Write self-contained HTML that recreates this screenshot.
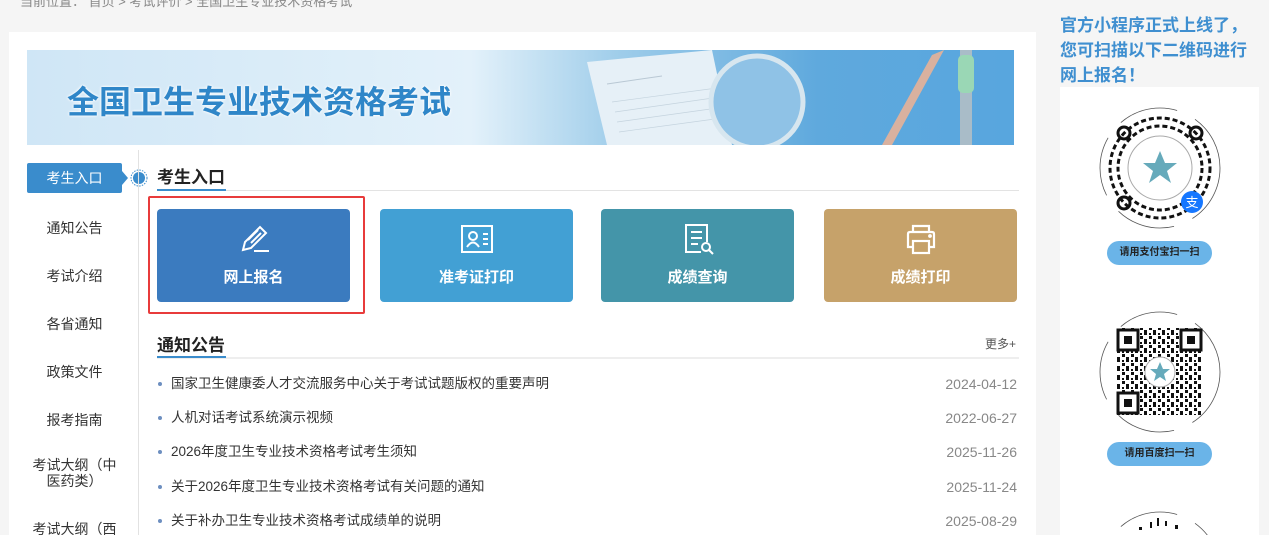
<!DOCTYPE html>
<html><head><meta charset="utf-8">
<style>
*{margin:0;padding:0;box-sizing:border-box}
html,body{width:1269px;height:535px;overflow:hidden}
body{background:#f5f5f5;font-family:"Liberation Sans","Noto Sans CJK SC",sans-serif;position:relative}
.abs{position:absolute}
.panel{left:9px;top:32px;width:1027px;height:503px;background:#fff}
.banner{left:27px;top:50px;width:987px;height:95px;background:linear-gradient(90deg,#cfe6f6 0%,#e3f1fa 45%,#9fcdea 60%,#5fa9dd 80%,#58a6de 100%);overflow:hidden}
.banner h1{position:absolute;left:40px;top:27px;font-size:32px;font-weight:bold;color:#2f86c8;text-shadow:0 0 3px #fff,0 0 2px #fff}
.nav{left:27px;width:95px;text-align:center;font-size:14px;color:#333}
.navact{left:27px;top:163px;width:95px;height:30px;background:#3a8ccc;color:#fff;font-size:14px;line-height:30px;text-align:center;border-radius:2px}
.vline{left:138px;top:150px;width:1px;height:385px;background:#e2e2e2}
.h2{font-size:17px;font-weight:bold;color:#222}
.btn{top:209px;width:193px;height:93px;border-radius:4px;color:#fff;font-size:15px;font-weight:bold;text-align:center}
.btn span{position:absolute;left:0;right:0;top:57px}
.btn svg{position:absolute;left:50%;top:13px;margin-left:-17px}
.news{left:157px;width:860px;height:18px;font-size:13.5px;color:#333;line-height:18px}
.news i{position:absolute;left:1px;top:7px;width:4px;height:4px;border-radius:50%;background:#6d8fc0}
.news b{font-weight:normal;position:absolute;left:14px;top:0;line-height:18px}
.news em{font-style:normal;position:absolute;right:0;top:0;color:#888;font-size:14px;line-height:18px}
.pill{left:1107px;width:105px;height:24px;border-radius:12px;background:#6ab4e8;color:#222;font-size:10px;font-weight:bold;text-align:center;line-height:24px}
</style></head><body>
<div class="abs" style="left:20px;top:-9px;font-size:13px;color:#888">当前位置： 首页 &gt; 考试评价 &gt; 全国卫生专业技术资格考试</div>
<div class="abs panel"></div>
<div class="abs banner">
<h1>全国卫生专业技术资格考试</h1>
<svg class="abs" style="left:540px;top:0" width="447" height="95">
<polygon points="20,12 145,0 165,95 40,95" fill="#e6f0f7"/>
<line x1="40" y1="34" x2="95" y2="26" stroke="#b9c8d4"/>
<g stroke="#c4d3de" stroke-width="0.7"><line x1="45" y1="52" x2="150" y2="38"/><line x1="48" y1="62" x2="160" y2="46"/><line x1="50" y1="72" x2="165" y2="56"/><line x1="52" y1="82" x2="170" y2="66"/></g>
<circle cx="190" cy="52" r="46" fill="#8fc2e6" stroke="#d7e6ef" stroke-width="5"/>
<polygon points="365,5 377,0 325,95 315,95" fill="#d9b19f"/>
<rect x="393" y="0" width="12" height="95" fill="#a9bcc8"/>
<rect x="391" y="5" width="16" height="38" rx="5" fill="#9ad7b5"/>
</svg>
</div>
<div class="abs navact">考生入口</div>
<svg class="abs" style="left:120px;top:166px" width="30" height="26"><polygon points="2,5 8,12 2,19" fill="#3a8ccc"/><circle cx="19" cy="12" r="8" fill="#fff" stroke="#3a8ccc" stroke-dasharray="1.5 1.2"/><circle cx="19" cy="12" r="6" fill="#3a8ccc"/></svg>
<div class="abs vline"></div>
<div class="abs nav" style="top:218px">通知公告</div>
<div class="abs nav" style="top:266px">考试介绍</div>
<div class="abs nav" style="top:314px">各省通知</div>
<div class="abs nav" style="top:362px">政策文件</div>
<div class="abs nav" style="top:410px">报考指南</div>
<div class="abs nav" style="top:457px;line-height:16px">考试大纲（中<br>医药类）</div>
<div class="abs nav" style="top:519px">考试大纲（西</div>

<div class="abs h2" style="left:157px;top:163px">考生入口</div>
<div class="abs" style="left:157px;top:190px;width:862px;height:1px;background:#e3e3e3"></div>
<div class="abs" style="left:157px;top:189px;width:69px;height:2px;background:#3a8ccc"></div>

<div class="abs" style="left:148px;top:196px;width:217px;height:118px;border:2px solid #e83b3b;border-radius:2px"></div>
<div class="abs btn" style="left:157px;background:#3b7bbf"><svg width="34" height="34" viewBox="0 0 34 34" fill="none" stroke="#fff" stroke-width="2"><path d="M6 28 L8 20 L23 5 L29 11 L14 26 Z"/><path d="M11 18 L21 8 M14 21 L24 11"/><path d="M17 29 H32"/></svg><span>网上报名</span></div>
<div class="abs btn" style="left:380px;background:#42a0d4"><svg width="34" height="34" viewBox="0 0 34 34" fill="none" stroke="#fff" stroke-width="2"><rect x="2" y="4" width="30" height="26"/><circle cx="13" cy="14" r="4"/><path d="M7 25 Q13 16 19 25"/><path d="M23 12h5M23 17h5M23 22h5"/></svg><span>准考证打印</span></div>
<div class="abs btn" style="left:601px;background:#4495a9"><svg width="34" height="34" viewBox="0 0 34 34" fill="none" stroke="#fff" stroke-width="2"><path d="M20 30 H5 V3 H26 V20"/><path d="M10 10h11M10 16h11M10 22h7"/><circle cx="25" cy="25" r="4"/><path d="M28 28 L32 32"/></svg><span>成绩查询</span></div>
<div class="abs btn" style="left:824px;background:#c6a26a"><svg width="34" height="34" viewBox="0 0 34 34" fill="none" stroke="#fff" stroke-width="2.2"><path d="M9 10 V4 H25 V10"/><path d="M9 25 H4 V12 Q4 10 6 10 H28 Q30 10 30 12 V25 H25"/><rect x="9" y="19" width="16" height="12"/><circle cx="26" cy="14" r="0.8" fill="#fff"/></svg><span>成绩打印</span></div>

<div class="abs h2" style="left:157px;top:331px">通知公告</div>
<div class="abs" style="left:985px;top:335px;font-size:12px;color:#555">更多+</div>
<div class="abs" style="left:157px;top:357px;width:862px;height:2px;background:#eee"></div>
<div class="abs" style="left:157px;top:356px;width:69px;height:2px;background:#3a8ccc"></div>

<div class="abs news" style="top:375px"><i></i><b>国家卫生健康委人才交流服务中心关于考试试题版权的重要声明</b><em>2024-04-12</em></div>
<div class="abs news" style="top:409px"><i></i><b>人机对话考试系统演示视频</b><em>2022-06-27</em></div>
<div class="abs news" style="top:443px"><i></i><b>2026年度卫生专业技术资格考试考生须知</b><em>2025-11-26</em></div>
<div class="abs news" style="top:478px"><i></i><b>关于2026年度卫生专业技术资格考试有关问题的通知</b><em>2025-11-24</em></div>
<div class="abs news" style="top:512px"><i></i><b>关于补办卫生专业技术资格考试成绩单的说明</b><em>2025-08-29</em></div>

<div class="abs" style="left:1060px;top:13px;font-size:17px;font-weight:bold;color:#3f8fd0;line-height:25px;white-space:nowrap">官方小程序正式上线了，<br>您可扫描以下二维码进行<br>网上报名！</div>
<div class="abs" style="left:1060px;top:87px;width:199px;height:448px;background:#fff"></div>

<svg class="abs" style="left:1095px;top:103px" width="130" height="130">
<circle cx="65" cy="65" r="60" fill="none" stroke="#555" stroke-width="0.8" stroke-dasharray="60 20"/>
<g fill="none" stroke="#111" stroke-width="3" stroke-dasharray="5 3"><circle cx="65" cy="65" r="50"/><circle cx="65" cy="65" r="42"/></g>
<circle cx="65" cy="65" r="32" fill="#fff" stroke="#aaa"/>
<g fill="none" stroke="#111" stroke-width="3"><circle cx="29" cy="30" r="6"/><circle cx="101" cy="30" r="6"/><circle cx="29" cy="100" r="6"/></g>
<polygon points="65,48 70,60 82,60 72,68 76,80 65,72 54,80 58,68 48,60 60,60" fill="#6ab"/>
<circle cx="97" cy="99" r="11" fill="#1677ff"/><text x="97" y="104" font-size="13" fill="#fff" text-anchor="middle" font-family="Noto Sans CJK SC">支</text>
</svg>
<div class="abs pill" style="top:241px">请用支付宝扫一扫</div>

<svg class="abs" style="left:1095px;top:300px" width="130" height="140">
<defs><pattern id="q" width="9" height="9" patternUnits="userSpaceOnUse"><rect width="3" height="3" fill="#111"/><rect x="4" y="3" width="3" height="5" fill="#111"/><rect x="0" y="6" width="2" height="2" fill="#111"/></pattern></defs>
<circle cx="65" cy="72" r="60" fill="none" stroke="#555" stroke-width="0.8" stroke-dasharray="60 20"/>
<rect x="21" y="28" width="87" height="87" fill="url(#q)"/>
<g fill="#fff" stroke="#111" stroke-width="3"><rect x="23" y="30" width="20" height="20"/><rect x="86" y="30" width="20" height="20"/><rect x="23" y="93" width="20" height="20"/></g>
<g fill="#111"><rect x="29" y="36" width="8" height="8"/><rect x="92" y="36" width="8" height="8"/><rect x="29" y="99" width="8" height="8"/></g>
<circle cx="65" cy="72" r="15" fill="#fff" stroke="#aaa"/>
<polygon points="65,62 68,69 75,69 69,74 71,81 65,77 59,81 61,74 55,69 62,69" fill="#6ab"/>
</svg>
<div class="abs pill" style="top:442px">请用百度扫一扫</div>
<svg class="abs" style="left:1095px;top:500px" width="130" height="35"><circle cx="65" cy="72" r="60" fill="none" stroke="#555" stroke-width="0.8" stroke-dasharray="60 20"/><g fill="#111"><rect x="55" y="22" width="2" height="6"/><rect x="62" y="18" width="2" height="8"/><rect x="70" y="21" width="2" height="5"/><rect x="44" y="27" width="3" height="3"/><rect x="80" y="25" width="3" height="4"/></g></svg>
</body></html>
